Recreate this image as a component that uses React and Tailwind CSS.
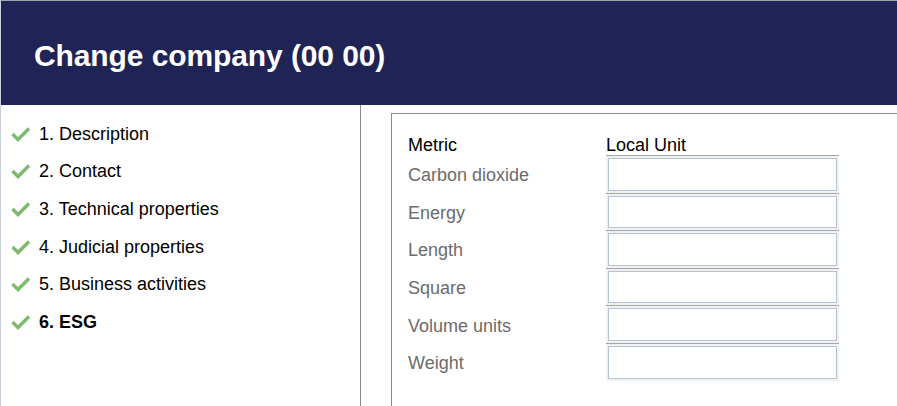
import React from "react";

const steps = [
  "1. Description",
  "2. Contact",
  "3. Technical properties",
  "4. Judicial properties",
  "5. Business activities",
  "6. ESG",
];

const metrics = ["Carbon dioxide", "Energy", "Length", "Square", "Volume units", "Weight"];

function Check() {
  return (
    <svg width="19" height="16" viewBox="0 0 19 16" className="shrink-0">
      <polyline
        points="1.5,8 7,13.5 18,2.5"
        fill="none"
        stroke="#7dba70"
        strokeWidth="3.4"
        strokeLinecap="butt"
        strokeLinejoin="miter"
      />
    </svg>
  );
}

export default function App() {
  return (
    <div
      className="w-[897px] h-[406px] overflow-hidden bg-white border-l border-t border-l-[#c9d1dc] border-t-[#a0a4b0] flex flex-col"
      style={{ fontFamily: '"Liberation Sans", Arial, sans-serif' }}
    >
      <header className="h-[104px] shrink-0 bg-[#1f2355] flex items-center pl-[33px] pt-[5px]">
        <h1 className="text-white font-bold text-[30px] leading-none tracking-[-0.1px]">
          Change company (00 00)
        </h1>
      </header>

      <div className="flex flex-1 min-h-0">
        <nav className="w-[360px] shrink-0 border-r border-[#8c8c8c] pt-[10px]">
          {steps.map((s, i) => (
            <div key={s} className="h-[37.6px] flex items-center pl-[10px] gap-[9px]">
              <Check />
              <span
                className={
                  "text-[18px] leading-none text-black " + (i === steps.length - 1 ? "font-bold" : "")
                }
              >
                {s}
              </span>
            </div>
          ))}
        </nav>

        <section className="flex-1 min-w-0 pl-[30px] pt-[8px]">
          <div className="w-[600px] h-[400px] border border-[#8c8c8c] pl-[16px] pt-[21px]">
            <div className="flex h-[20px] items-center text-[18px] text-black leading-none">
              <span className="w-[198px]">Metric</span>
              <span>Local Unit</span>
            </div>
            {metrics.map((m) => (
              <div key={m} className="flex items-center h-[37.6px]">
                <span className="w-[198px] pt-[3px] text-[18px] leading-none text-[#6b6b6b]">{m}</span>
                <div className="w-[233px] h-full border-t border-[#a6a6a6] bg-[#f1f1f1] px-[2px] pt-[2px] pb-[2px]">
                  <input
                    type="text"
                    className="block w-full h-full bg-white border border-[#b5c3d4] outline-none px-1 text-[16px]"
                  />
                </div>
              </div>
            ))}
          </div>
        </section>
      </div>
    </div>
  );
}
